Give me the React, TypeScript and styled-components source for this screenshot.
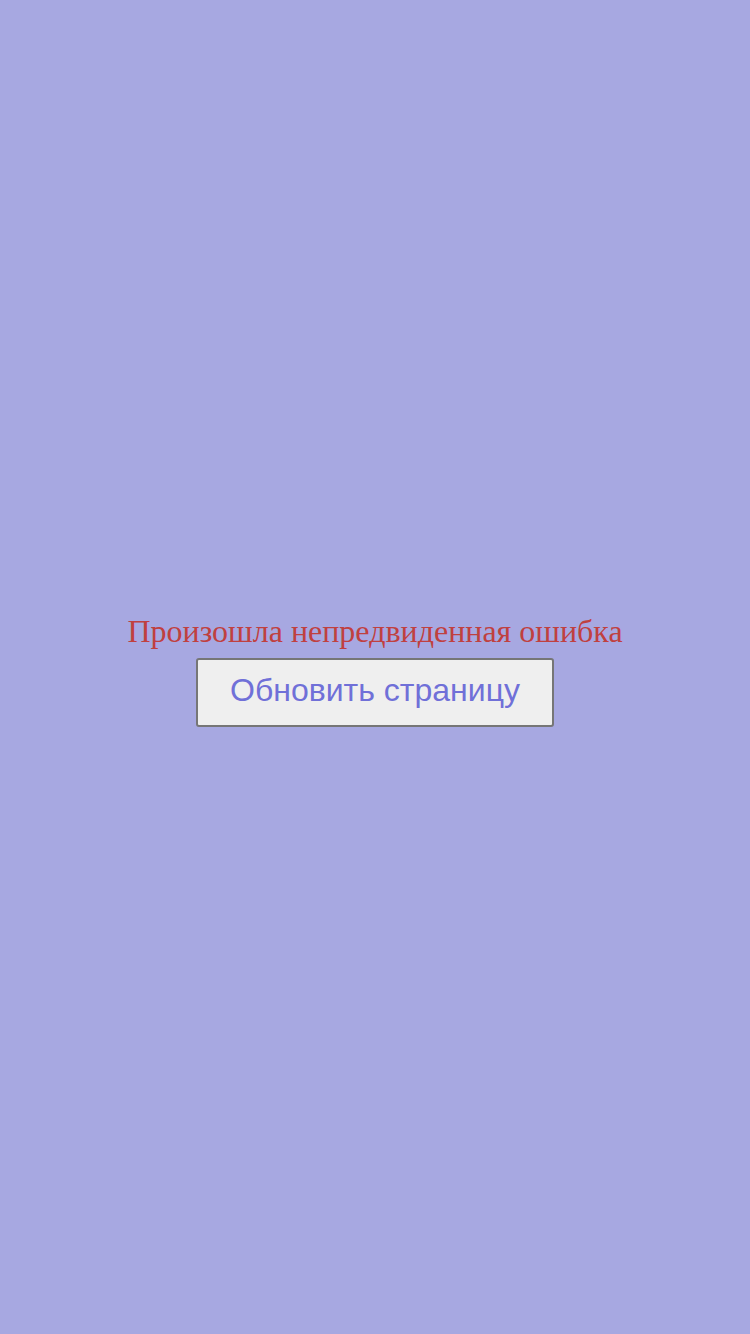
import React from "react";
import styled, { createGlobalStyle } from "styled-components";

const Global = createGlobalStyle`
  html, body { margin: 0; padding: 0; }
  body { background: #a7a8e1; }
`;

const Page = styled.div`
  min-height: 100vh;
  box-sizing: border-box;
  padding-top: 6px;
  display: flex;
  flex-direction: column;
  align-items: center;
  justify-content: center;
`;

const Message = styled.div`
  font-family: "Liberation Serif", "Times New Roman", serif;
  font-size: 32px;
  line-height: 37px;
  color: #c0403f;
  margin-bottom: 8px;
`;

const ReloadButton = styled.button`
  font-family: "Liberation Sans", Arial, sans-serif;
  font-size: 32px;
  line-height: 37px;
  color: #7070d8;
  background: #efefef;
  border: 2px solid #767676;
  border-radius: 3px;
  padding: 12px 32px 16px;
  cursor: pointer;
`;

export default function App() {
  return (
    <>
      <Global />
      <Page>
        <Message>Произошла непредвиденная ошибка</Message>
        <ReloadButton onClick={() => window.location.reload()}>Обновить страницу</ReloadButton>
      </Page>
    </>
  );
}
